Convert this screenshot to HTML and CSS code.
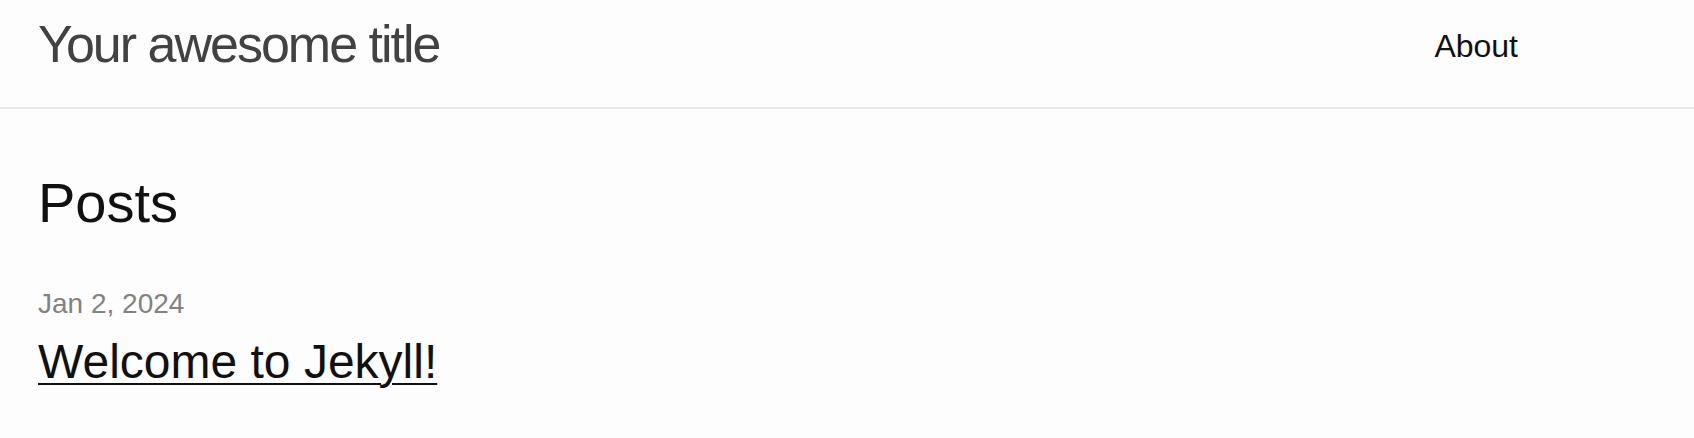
FILE: index.html
```html
<!DOCTYPE html>
<html>
<meta charset="utf-8">
<head>
  <link rel="stylesheet" href="styles.css">
</head>
<body>
  <header class="site-header">
    <a class="site-title" href="#">Your awesome title</a>
    <nav class="site-nav">
      <a class="page-link" href="#">About</a>
    </nav>
  </header>

  <main class="page-content">
    <h2 class="post-list-heading">Posts</h2>
    <ul class="post-list">
      <li>
        <span class="post-meta">Jan 2, 2024</span>
        <h3 class="post-title">
          <a class="post-link" href="#">Welcome to Jekyll!</a>
        </h3>
      </li>
    </ul>
  </main>
</body>
</html>
```

FILE: styles.css
```css
body {
  margin: 0;
  padding: 0;
  font-family: "Liberation Sans", Helvetica, Arial, sans-serif;
  background-color: #fdfdfd;
  color: #111;
}

a {
  color: #111;
}

.site-header {
  display: flex;
  justify-content: space-between;
  align-items: flex-start;
  height: 107px;
  padding: 0 176px 0 38px;
  border-bottom: 2px solid #e8e8e8;
}

.site-title {
  font-size: 52px;
  line-height: 88px;
  letter-spacing: -2px;
  color: #424242;
  text-decoration: none;
}

.site-nav {
  line-height: 92px;
}

.page-link {
  font-size: 32px;
  color: #111;
  text-decoration: none;
}

.page-content {
  padding: 66px 38px 0 38px;
}

.post-list-heading {
  margin: 0;
  font-size: 56px;
  font-weight: normal;
  line-height: 56px;
}

.post-list {
  list-style: none;
  margin: 52px 0 0 0;
  padding: 0;
}

.post-meta {
  display: block;
  font-size: 28px;
  line-height: 42px;
  color: #828282;
}

.post-title {
  margin: 8px 0 0 0;
  font-size: 48px;
  font-weight: normal;
  line-height: 57px;
}

.post-link {
  text-decoration-thickness: 2px;
  text-underline-offset: 5px;
}
```
